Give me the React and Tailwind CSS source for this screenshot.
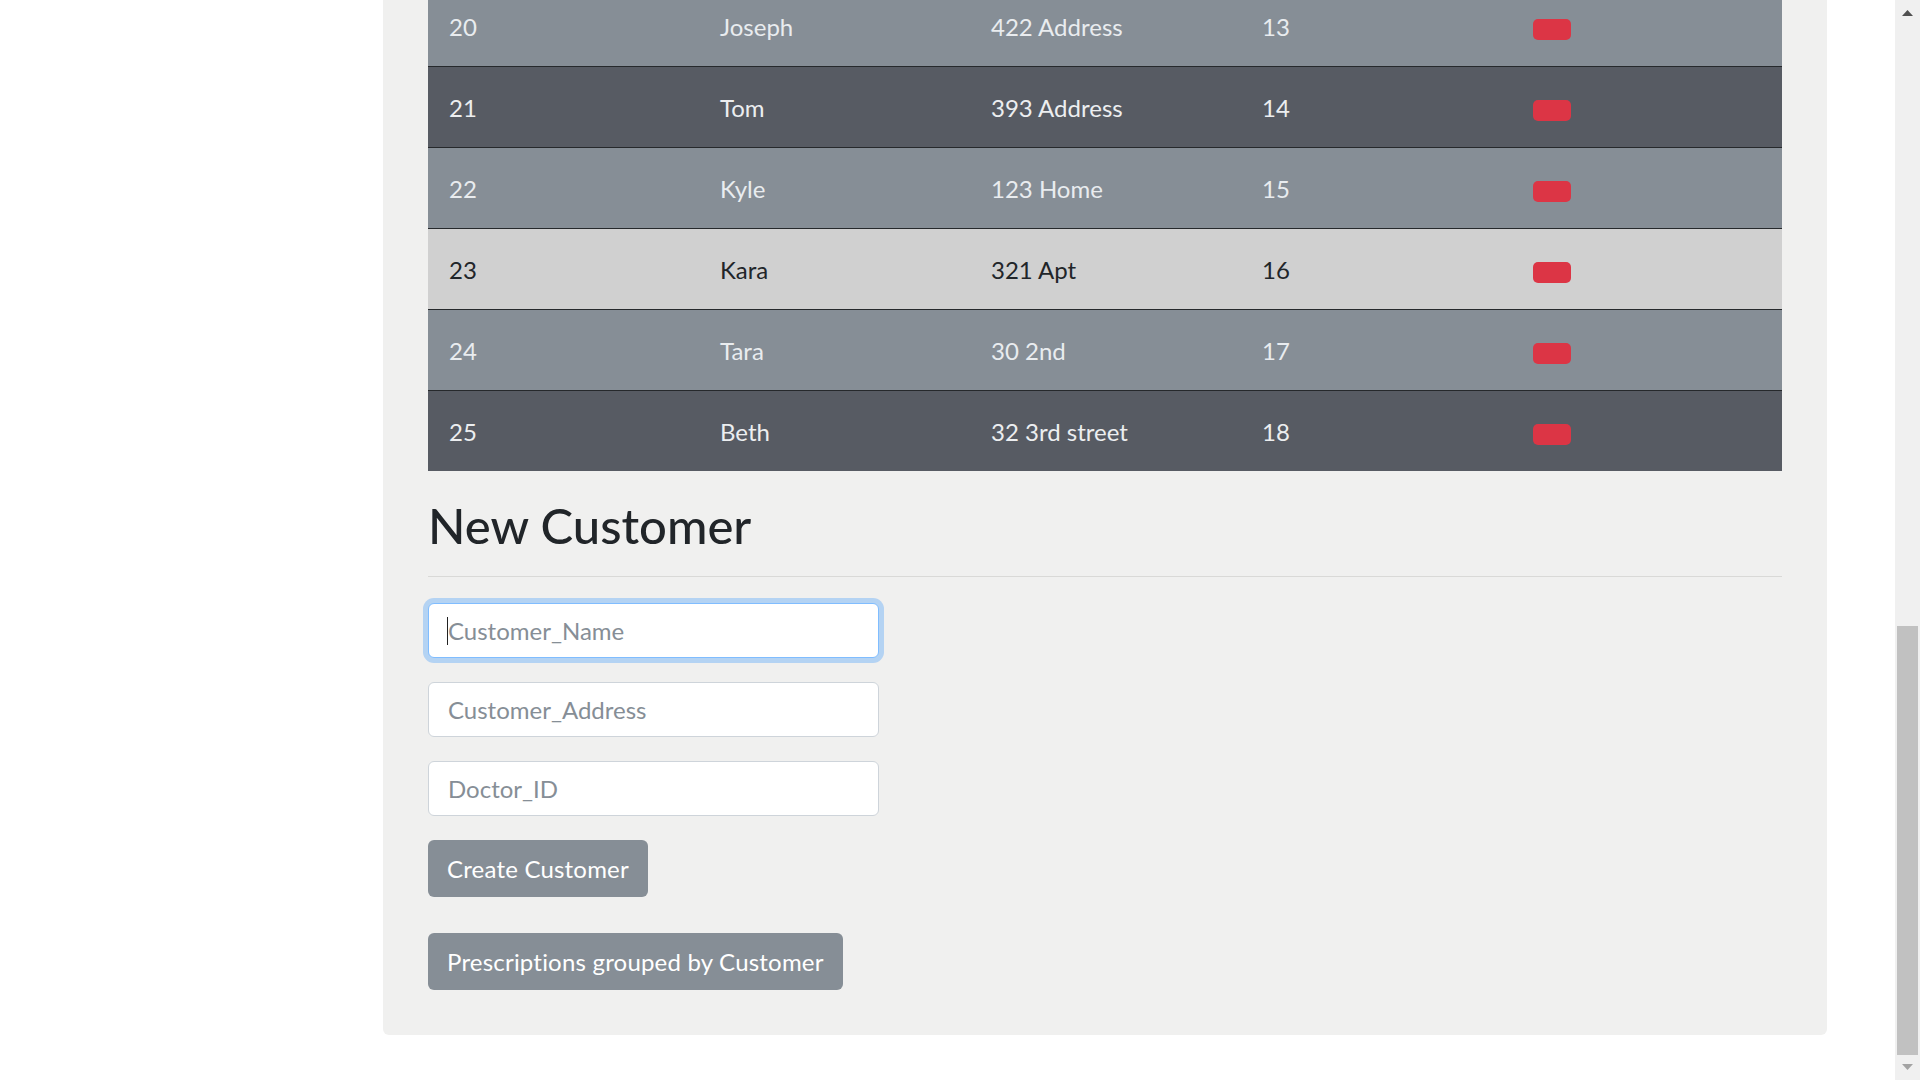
import React from "react";

const rows = [
  { id: 20, name: "Joseph", addr: "422 Address", doc: 13, tone: "gray" },
  { id: 21, name: "Tom", addr: "393 Address", doc: 14, tone: "dark" },
  { id: 22, name: "Kyle", addr: "123 Home", doc: 15, tone: "gray" },
  { id: 23, name: "Kara", addr: "321 Apt", doc: 16, tone: "light" },
  { id: 24, name: "Tara", addr: "30 2nd", doc: 17, tone: "gray" },
  { id: 25, name: "Beth", addr: "32 3rd street", doc: 18, tone: "dark" },
];

const toneClass = {
  gray: "bg-[#868e96] text-[#e9ecef]",
  dark: "bg-[#575b63] text-[#eceef0]",
  light: "bg-[#d0d0d0] text-[#212529]",
};

function Row({ r }) {
  return (
    <div className={`grid grid-cols-[271px_271px_271px_271px_270px] h-[81px] border-t border-[#26292c] ${toneClass[r.tone]}`}>
      <div className="pl-[21px] pt-[23px] leading-[36px]">{r.id}</div>
      <div className="pl-[21px] pt-[23px] leading-[36px]">{r.name}</div>
      <div className="pl-[21px] pt-[23px] leading-[36px]">{r.addr}</div>
      <div className="pl-[21px] pt-[23px] leading-[36px]">{r.doc}</div>
      <div className="pl-[21px] pt-[33px]">
        <button className="block w-[38px] h-[21px] rounded-[5px] bg-[#dc3545]" aria-label="delete"></button>
      </div>
    </div>
  );
}

export default function App() {
  return (
    <div className="flex h-screen w-full overflow-hidden bg-white font-['Lato','Open_Sans',sans-serif] text-[24px]">
      <div className="flex-1 overflow-hidden">
        <div className="ml-[383px] w-[1444px] -mt-[15px] bg-[#f0f0ef] rounded-b-[6px] pl-[45px] pr-[45px] pb-[45px]">
          <div className="w-[1354px]">
            {rows.map((r) => (
              <Row key={r.id} r={r} />
            ))}
          </div>

          <h2 className="mt-[26px] text-[49px] leading-[57.6px] font-medium text-[#212529]">
            New Customer
          </h2>
          <div className="mt-[21px] h-[1.5px] bg-[#d9d9d7]" />

          <div className="mt-[26px] flex flex-col gap-[24px]">
            <div className="relative w-[451px]">
              <input
                className="block w-[451px] h-[55px] rounded-[6px] border-[1.5px] border-[#80bdff] bg-white px-[19px] text-[24px] text-[#495057] outline-none shadow-[0_0_0_5px_rgba(0,123,255,0.25)] placeholder:text-[#868e96]"
                placeholder="Customer_Name"
              />
              <span className="absolute left-[19px] top-[14px] h-[28px] w-px bg-[#222]" />
            </div>
            <input
              className="block w-[451px] h-[55px] rounded-[6px] border-[1.5px] border-[#ced4da] bg-white px-[19px] text-[24px] text-[#495057] outline-none placeholder:text-[#868e96]"
              placeholder="Customer_Address"
            />
            <input
              className="block w-[451px] h-[55px] rounded-[6px] border-[1.5px] border-[#ced4da] bg-white px-[19px] text-[24px] text-[#495057] outline-none placeholder:text-[#868e96]"
              placeholder="Doctor_ID"
            />
          </div>

          <button className="mt-[24px] block h-[57px] rounded-[6px] bg-[#868e96] px-[19px] text-[24px] tracking-[0.2px] text-white">
            Create Customer
          </button>
          <button className="mt-[36px] block h-[57px] rounded-[6px] bg-[#868e96] px-[19px] text-[24px] tracking-[0.2px] text-white">
            Prescriptions grouped by Customer
          </button>
        </div>
      </div>

      <div className="flex w-[25px] flex-col bg-[#f0f0f0]">
        <div className="flex h-[25px] items-start justify-center pt-[10px]">
          <svg width="11" height="6" viewBox="0 0 11 6">
            <polygon points="5.5,0 11,6 0,6" fill="#505050" />
          </svg>
        </div>
        <div className="h-[601px]" />
        <div className="mx-[2px] h-[429px] bg-[#c1c1c1]" />
        <div className="flex flex-1 items-start justify-center pt-[9px]">
          <svg width="11" height="6" viewBox="0 0 11 6">
            <polygon points="0,0 11,0 5.5,6" fill="#a3a3a3" />
          </svg>
        </div>
      </div>
    </div>
  );
}
